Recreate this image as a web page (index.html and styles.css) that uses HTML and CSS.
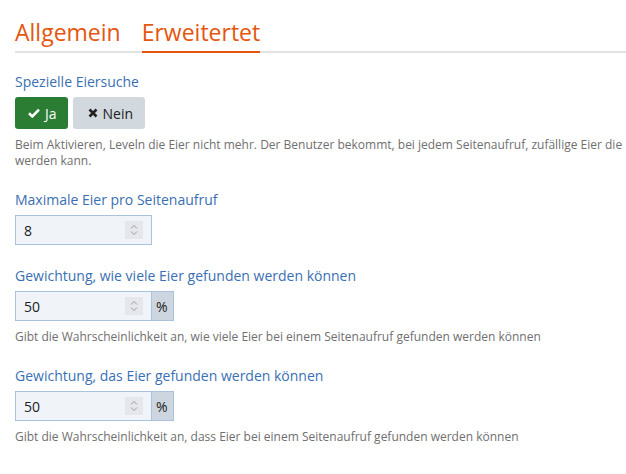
FILE: index.html
```html
<!DOCTYPE html>
<html lang="de">
<head>
    <meta charset="UTF-8">
    <meta name="viewport" content="width=device-width, initial-scale=1.0">
    <title>Eiersuche Einstellungen</title>
    <link rel="stylesheet" href="styles.css">
</head>
<body>
    <div class="tabs">
        <div class="tab">Allgemein</div>
        <div class="tab active">Erweitertet</div>
    </div>

    <div class="group first">
        <label class="label">Spezielle Eiersuche</label>
        <div class="toggle">
            <button class="btn btn-yes">
                <svg width="12" height="10" viewBox="0 0 12 10"><path d="M1 5.2 L4.3 8.4 L11 1.6" fill="none" stroke="#fff" stroke-width="2.6"/></svg>
                Ja
            </button>
            <button class="btn btn-no">
                <svg width="10" height="10" viewBox="0 0 10 10"><path d="M1.5 1.5 L8.5 8.5 M8.5 1.5 L1.5 8.5" fill="none" stroke="#222" stroke-width="2.6"/></svg>
                Nein
            </button>
        </div>
        <p class="help">Beim Aktivieren, Leveln die Eier nicht mehr. Der Benutzer bekommt, bei jedem Seitenaufruf, zufällige Eier die werden kann.</p>
    </div>

    <div class="group">
        <label class="label">Maximale Eier pro Seitenaufruf</label>
        <div class="input-group">
            <div class="number">
                <input type="text" value="8">
                <span class="spin"><svg width="18" height="18" viewBox="0 0 18 18"><path d="M6 7.5 L9 4.5 L12 7.5 M6 10.5 L9 13.5 L12 10.5" fill="none" stroke="#9a9a9a" stroke-width="1"/></svg></span>
            </div>
        </div>
    </div>

    <div class="group">
        <label class="label">Gewichtung, wie viele Eier gefunden werden können</label>
        <div class="input-group">
            <div class="number">
                <input type="text" value="50">
                <span class="spin"><svg width="18" height="18" viewBox="0 0 18 18"><path d="M6 7.5 L9 4.5 L12 7.5 M6 10.5 L9 13.5 L12 10.5" fill="none" stroke="#9a9a9a" stroke-width="1"/></svg></span>
            </div>
            <span class="addon">%</span>
        </div>
        <p class="help">Gibt die Wahrscheinlichkeit an, wie viele Eier bei einem Seitenaufruf gefunden werden können</p>
    </div>

    <div class="group">
        <label class="label">Gewichtung, das Eier gefunden werden können</label>
        <div class="input-group">
            <div class="number">
                <input type="text" value="50">
                <span class="spin"><svg width="18" height="18" viewBox="0 0 18 18"><path d="M6 7.5 L9 4.5 L12 7.5 M6 10.5 L9 13.5 L12 10.5" fill="none" stroke="#9a9a9a" stroke-width="1"/></svg></span>
            </div>
            <span class="addon">%</span>
        </div>
        <p class="help">Gibt die Wahrscheinlichkeit an, dass Eier bei einem Seitenaufruf gefunden werden können</p>
    </div>
</body>
</html>
```

FILE: styles.css
```css
body {
    margin: 0;
    padding: 14px 0 0 15px;
    font-family: "Open Sans", Arial, sans-serif;
    background: #fff;
    color: #333;
}
.tabs {
    display: flex;
    gap: 21px;
    border-bottom: 2px solid #e2e2e2;
}
.tab {
    font-size: 23px;
    line-height: 37px;
    color: #e5560f;
    margin-bottom: -2px;
    border-bottom: 2px solid transparent;
}
.tab.active {
    border-bottom-color: #e5560f;
}
.group {
    margin-top: 21px;
}
.group.first {
    margin-top: 19px;
}
.label {
    display: block;
    font-size: 14px;
    line-height: 20px;
    color: #3a6fb3;
    margin-bottom: 5px;
}
.toggle {
    display: flex;
    gap: 5px;
}
.btn {
    display: flex;
    align-items: center;
    gap: 5px;
    height: 32px;
    padding: 0 12px 0 15px;
    border: none;
    border-radius: 3px;
    font-family: inherit;
    font-size: 14px;
}
.btn-yes {
    background: #2b7d33;
    color: #fff;
    padding: 0 11px 0 13px;
}
.btn-no {
    background: #d1d8de;
    color: #222;
}
.help {
    margin: 8px 0 0;
    padding-right: 2px;
    font-size: 12px;
    line-height: 16px;
    color: #6f6f6f;
}
.input-group {
    display: flex;
    height: 30px;
}
.number {
    display: flex;
    align-items: center;
    width: 135px;
    background: #f0f4f9;
    border: 1px solid #a9c2de;
}
.number input {
    width: 90px;
    border: none;
    background: transparent;
    font-family: inherit;
    font-size: 14px;
    color: #222;
    padding: 0 0 0 8px;
    outline: none;
}
.spin {
    display: flex;
    width: 18px;
    height: 18px;
    margin-left: 11px;
    background: #e6e7ec;
}
.addon {
    display: flex;
    align-items: center;
    padding: 0 5px 0 4px;
    background: #cdd6de;
    border: 1px solid #a9c2de;
    border-left: none;
    font-size: 14px;
    color: #222;
}
```
